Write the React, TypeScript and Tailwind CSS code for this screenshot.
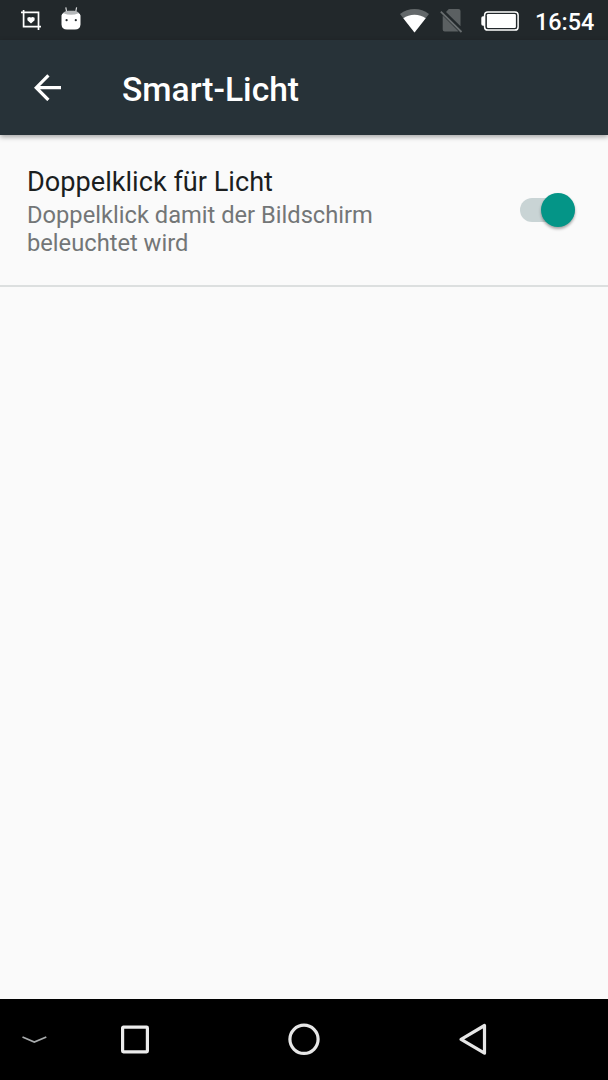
import { clsx } from 'clsx';
import { type FC, useState } from 'react';

const ScreenshotIcon: FC = () => (
	<svg width="20" height="20" viewBox="0 0 20 20" fill="none">
		<path d="M0 2.4H17.5V16.6M2.6 0V16.6H20M17.5 16V20" stroke="#fff" strokeWidth="1.7" />
		<path d="M10 13.4L6.4 10.2V7.8L8.2 6.9L10 7.6L11.8 6.9L13.6 7.8V10.2Z" fill="#fff" />
	</svg>
);

const DroidIcon: FC = () => (
	<svg width="20" height="24" viewBox="0 0 20 24" fill="none">
		<path d="M4.8 0.3L5.7 5M15.6 0.3L14.7 5" stroke="#d8dadb" strokeWidth="1.2" />
		<path d="M0.8 9Q1.6 4.3 7 3.7H13Q18.4 4.3 19.2 9Z" fill="#b4b7b9" />
		<path d="M0.5 8.4Q1 6.4 2.4 6.2Q10 9.4 17.6 6.2Q19 6.4 19.5 8.4V17.5Q19.2 22.6 14 22.6H6Q0.8 22.6 0.5 17.5Z" fill="#fff" />
		<circle cx="5.6" cy="13.2" r="1.1" fill="#22282b" />
		<circle cx="14.8" cy="13.2" r="1.1" fill="#22282b" />
	</svg>
);

const WifiIcon: FC = () => (
	<svg width="29" height="24" viewBox="0 0 29 24">
		<path d="M14.5 23.5L0 5Q6.5 0 14.5 0T29 5Z" fill="#63686a" />
		<path d="M14.5 23.5L3.3 9.2Q8 5.7 14.5 5.7T25.7 9.2Z" fill="#fff" />
	</svg>
);

const NoSimIcon: FC = () => (
	<svg width="23" height="24" viewBox="0 0 23 24">
		<path d="M8.8 0H18.5Q20.5 0 20.5 2V17.3L6 3ZM2.7 6.6L18.4 22.2Q18.2 22.4 18 22.4H4.7Q2.7 22.4 2.7 20.4Z" fill="#5b6062" />
		<path d="M0.8 2.6L21.5 23" stroke="#696e70" strokeWidth="1.8" />
	</svg>
);

const BatteryIcon: FC = () => (
	<svg width="38" height="20" viewBox="0 0 38 20" fill="none">
		<rect x="3.6" y="0.9" width="33.5" height="18.2" rx="3.2" stroke="#fff" strokeWidth="1.5" />
		<rect x="5.9" y="3.1" width="29" height="13.8" rx="1.2" fill="#fff" />
		<path d="M3.6 5.2H2Q0.3 5.2 0.3 7V13Q0.3 14.8 2 14.8H3.6Z" fill="#fff" />
	</svg>
);

const BackArrow: FC = () => (
	<svg width="27" height="27" viewBox="0 0 27 27" fill="none">
		<path d="M27 13.7H3M14.4 1.4L2.2 13.7L14.4 26" stroke="#fff" strokeWidth="3.2" />
	</svg>
);

const StatusBar: FC = () => (
	<div className="flex h-10 shrink-0 items-start bg-[#22282b] text-white">
		<div className="flex pl-[21px]">
			<div className="pt-[10px]">
				<ScreenshotIcon />
			</div>
			<div className="ml-5 pt-[7px]">
				<DroidIcon />
			</div>
		</div>
		<div className="ml-auto flex items-start pr-[14px]">
			<div className="pt-[9px]">
				<WifiIcon />
			</div>
			<div className="ml-[11px] pt-[9px]">
				<NoSimIcon />
			</div>
			<div className="ml-[18px] pt-[11px]">
				<BatteryIcon />
			</div>
			<span className="ml-4 w-[59px] whitespace-nowrap pt-2 text-[23.4px] leading-7 font-medium">16:54</span>
		</div>
	</div>
);

const AppBar: FC = () => (
	<header className="z-10 flex h-[95px] shrink-0 items-center bg-[#273238] pl-[34px] text-white shadow-[0_2px_5px_rgba(0,0,0,0.35)]">
		<button type="button" aria-label="Zurück">
			<BackArrow />
		</button>
		<h1 className="ml-[61px] pt-1 text-[33.6px] leading-10 font-medium">Smart-Licht</h1>
	</header>
);

interface SwitchRowProps {
	title: string;
	summary: string;
	checked: boolean;
	onToggle: () => void;
}

const SwitchRow: FC<SwitchRowProps> = ({ title, summary, checked, onToggle }) => (
	<div className="flex h-[152px] items-center justify-between border-b-2 border-[#dcdfdf] pr-[33px] pl-[27px]">
		<div className="w-[400px] pt-[3px]">
			<div className="text-[27.15px] leading-8 text-[#1b1e1f]">{title}</div>
			<div className="pt-[3px] text-[23.7px] leading-7 text-[#737677]">{summary}</div>
		</div>
		<button
			type="button"
			role="switch"
			aria-checked={checked}
			aria-label={title}
			onClick={onToggle}
			className={clsx('flex h-6 w-[55px] items-center rounded-full bg-[#c9d4d5]', checked ? 'justify-end' : 'justify-start')}
		>
			<span className={clsx('size-[34px] rounded-full shadow-[0_2px_3px_rgba(0,0,0,0.35)]', checked ? 'bg-[#049587]' : 'bg-[#f1f1f1]')} />
		</button>
	</div>
);

const NavBar: FC = () => (
	<nav className="flex h-[81px] shrink-0 items-center bg-black pb-px pl-[22px]">
		<svg width="25" height="8" viewBox="0 0 25 8" fill="none">
			<path d="M0.5 2L12.3 7L24.3 2" stroke="#a8abac" strokeWidth="1.8" />
		</svg>
		<svg className="ml-[74px]" width="28" height="29" viewBox="0 0 28 29" fill="none">
			<rect x="1.6" y="2.1" width="24.8" height="24.8" rx="0.8" stroke="#ececec" strokeWidth="3.2" />
		</svg>
		<svg className="ml-[139px]" width="32" height="32" viewBox="0 0 32 32" fill="none">
			<circle cx="16" cy="16.3" r="14.1" stroke="#e6e6e6" strokeWidth="3.2" />
		</svg>
		<svg className="ml-[139px]" width="28" height="32" viewBox="0 0 28 32" fill="none">
			<path d="M2.1 16.4L25.5 2.5V30.2Z" stroke="#e6e6e6" strokeWidth="3.2" strokeLinejoin="round" />
		</svg>
	</nav>
);

export default function App() {
	const [doubleTap, setDoubleTap] = useState(true);

	return (
		<div className="flex h-[1080px] w-[608px] flex-col overflow-hidden bg-[#fafafa] font-['Roboto',sans-serif]">
			<StatusBar />
			<AppBar />
			<main className="flex-1">
				<SwitchRow
					title="Doppelklick für Licht"
					summary="Doppelklick damit der Bildschirm beleuchtet wird"
					checked={doubleTap}
					onToggle={() => setDoubleTap(!doubleTap)}
				/>
			</main>
			<NavBar />
		</div>
	);
}
